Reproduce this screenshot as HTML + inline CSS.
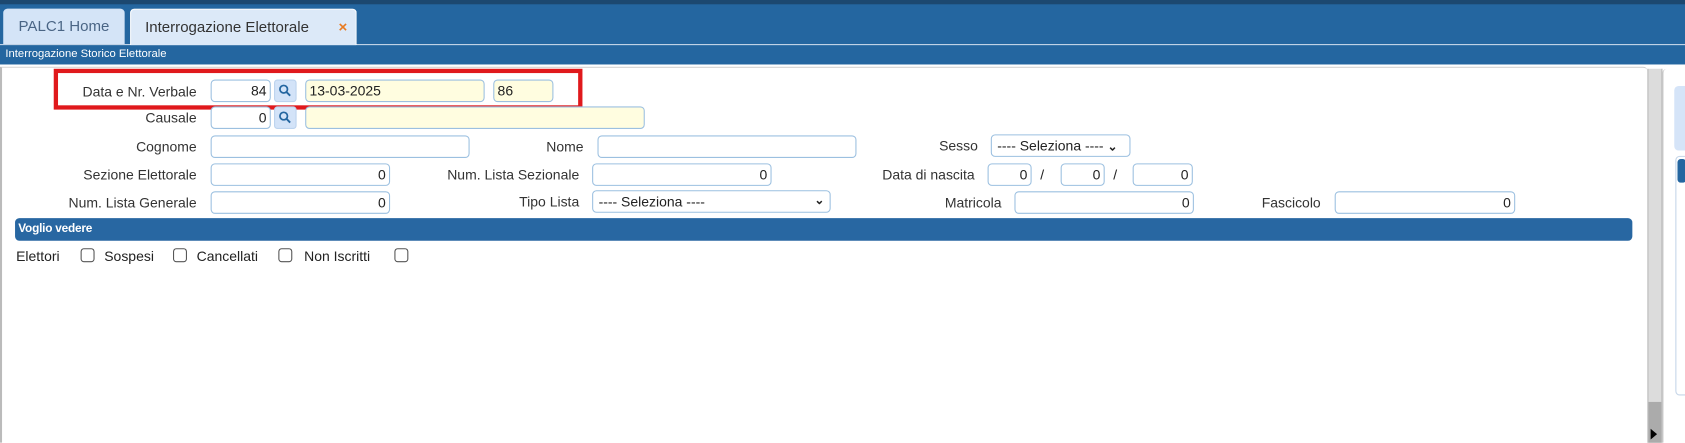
<!DOCTYPE html>
<html><head><meta charset="utf-8"><style>
*{box-sizing:border-box;margin:0;padding:0}
html,body{width:1685px;height:442px;overflow:hidden;background:#fff}
#w{position:absolute;left:0;top:0;width:1568px;height:412px;transform:scale(1.07462);transform-origin:0 0;font-family:"Liberation Sans",sans-serif;font-size:13px;color:#222}
.a{position:absolute}
.lbl{position:absolute;text-align:right;white-space:nowrap;color:#333}
.in{position:absolute;height:21px;border:1px solid #9cc0e0;border-radius:4px;background:#fff;padding:1px 3px;line-height:17px;text-align:right;white-space:nowrap}
.y{background:#fffde0;text-align:left}
.btn{position:absolute;width:21px;height:21px;background:#d3e3f8;border-radius:3px;border:1px solid #bcd3ee}
.sel{position:absolute;height:21px;border:1px solid #9cc0e0;border-radius:4px;background:#fff;padding:1px 5px;line-height:17px;white-space:nowrap}
.cb{position:absolute;width:13px;height:13px;border:1px solid #555;border-radius:3px;background:#fff}
</style></head><body><div id="w">
<div class="a" style="left:0;top:0;width:1568px;height:60px;background:#2466a0"></div>
<div class="a" style="left:0;top:0;width:1568px;height:4px;background:#1c4870"></div>
<div class="a" style="left:0;top:41px;width:1568px;height:1px;background:#c9d9ea"></div>
<div class="a" style="left:3px;top:8px;width:113px;height:33px;background:#d4e4f7;border-radius:4px 4px 0 0;color:#4a6585;font-size:14px;line-height:33px;text-align:center">PALC1 Home</div>
<div class="a" style="left:121px;top:8px;width:211px;height:34px;background:#dce9f8;border:1px solid #fff;border-bottom:none;border-radius:4px 4px 0 0;color:#333;font-size:14px;line-height:32px;padding-left:13px">Interrogazione Elettorale<span style="position:absolute;left:193px;color:#e87a20;font-weight:bold">×</span></div>
<div class="a" style="left:5px;top:44px;color:#fff;font-size:10.5px">Interrogazione Storico Elettorale</div>
<div class="a" style="left:0;top:62px;width:1533px;height:350px;border-left:2px solid #bbb;border-top:1px solid #ccc;background:#fff;border-radius:0 4px 0 0"></div>
<div class="a" style="left:1533px;top:64px;width:14px;height:348px;background:#dcdcdc;border-left:1px solid #bbb;border-right:1px solid #bbb"></div>
<div class="a" style="left:1534px;top:374px;width:12px;height:38px;background:#ababab"></div>
<div class="a" style="left:1536px;top:399px;width:0;height:0;border-left:6px solid #000;border-top:5px solid transparent;border-bottom:5px solid transparent"></div>
<div class="a" style="left:1547px;top:64px;width:21px;height:348px;background:#fff;border-left:1px solid #ccc;border-radius:4px 0 0 0"></div>
<div class="a" style="left:1558px;top:80px;width:20px;height:60px;background:#d5e4f8;border-radius:4px"></div>
<div class="a" style="left:1559px;top:145px;width:20px;height:223px;border:1px solid #c5d5e8;border-radius:4px"></div>
<div class="a" style="left:1561px;top:148px;width:8px;height:22px;background:#2466a0;border-radius:3px"></div>

<div class="a" style="left:50px;top:64px;width:492px;height:38px;border:4px solid #e0191c"></div>

<div class="lbl" style="right:1385px;top:78px">Data e Nr. Verbale</div>
<div class="in" style="left:196px;top:74px;width:56px">84</div>
<div class="btn" style="left:255px;top:74px"><svg width="19" height="19"><circle cx="8" cy="8" r="3.5" fill="none" stroke="#2466a0" stroke-width="1.6"/><path d="M10.5 10.5L14 14" stroke="#2466a0" stroke-width="1.8"/></svg></div>
<div class="in y" style="left:284px;top:74px;width:167px">13-03-2025</div>
<div class="in y" style="left:459px;top:74px;width:56px">86</div>

<div class="lbl" style="right:1385px;top:102px">Causale</div>
<div class="in" style="left:196px;top:99px;width:56px">0</div>
<div class="btn" style="left:255px;top:99px"><svg width="19" height="19"><circle cx="8" cy="8" r="3.5" fill="none" stroke="#2466a0" stroke-width="1.6"/><path d="M10.5 10.5L14 14" stroke="#2466a0" stroke-width="1.8"/></svg></div>
<div class="in y" style="left:284px;top:99px;width:316px"></div>

<div class="lbl" style="right:1385px;top:129px">Cognome</div>
<div class="in" style="left:196px;top:126px;width:241px"></div>
<div class="lbl" style="right:1025px;top:129px">Nome</div>
<div class="in" style="left:556px;top:126px;width:241px"></div>
<div class="lbl" style="right:658px;top:128px">Sesso</div>
<div class="sel" style="left:922px;top:125px;width:130px">---- Seleziona ---- <b style="font-size:11px">&#8964;</b></div>

<div class="lbl" style="right:1385px;top:155px">Sezione Elettorale</div>
<div class="in" style="left:196px;top:152px;width:167px">0</div>
<div class="lbl" style="right:1029px;top:155px">Num. Lista Sezionale</div>
<div class="in" style="left:551px;top:152px;width:167px">0</div>
<div class="lbl" style="right:661px;top:155px">Data di nascita</div>
<div class="in" style="left:919px;top:152px;width:41px">0</div>
<div class="a" style="left:968px;top:155px">/</div>
<div class="in" style="left:987px;top:152px;width:41px">0</div>
<div class="a" style="left:1036px;top:155px">/</div>
<div class="in" style="left:1054px;top:152px;width:56px">0</div>

<div class="lbl" style="right:1385px;top:181px">Num. Lista Generale</div>
<div class="in" style="left:196px;top:178px;width:167px">0</div>
<div class="lbl" style="right:1029px;top:180px">Tipo Lista</div>
<div class="sel" style="left:551px;top:177px;width:222px">---- Seleziona ----<span style="position:absolute;right:5px;font-weight:bold;font-size:11px">&#8964;</span></div>
<div class="lbl" style="right:636px;top:181px">Matricola</div>
<div class="in" style="left:944px;top:178px;width:167px">0</div>
<div class="lbl" style="right:339px;top:181px">Fascicolo</div>
<div class="in" style="left:1242px;top:178px;width:168px">0</div>

<div class="a" style="left:14px;top:203px;width:1505px;height:21px;background:#2867a2;border-radius:4px;color:#fff;font-weight:bold;font-size:11px;line-height:21px;padding-left:3px;letter-spacing:-0.2px">Voglio vedere</div>

<div class="a" style="left:15px;top:231px">Elettori</div><div class="cb" style="left:75px;top:231px"></div>
<div class="a" style="left:97px;top:231px">Sospesi</div><div class="cb" style="left:161px;top:231px"></div>
<div class="a" style="left:183px;top:231px">Cancellati</div><div class="cb" style="left:259px;top:231px"></div>
<div class="a" style="left:283px;top:231px">Non Iscritti</div><div class="cb" style="left:367px;top:231px"></div>
</div></body></html>
